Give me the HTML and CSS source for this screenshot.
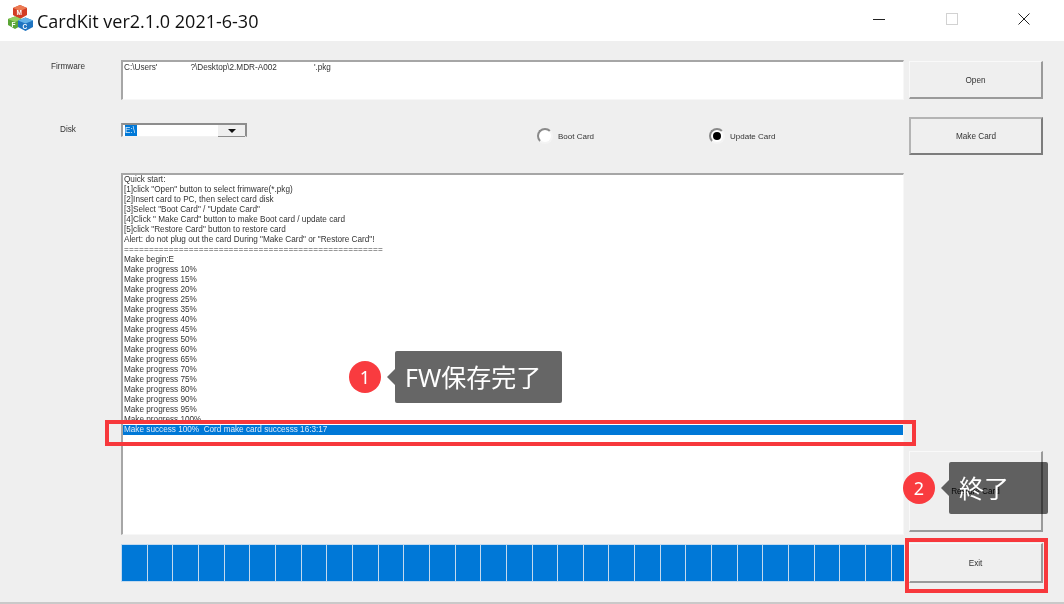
FILE: index.html
```html
<!DOCTYPE html>
<html lang="ja">
<head>
<meta charset="utf-8">
<title>CardKit</title>
<link rel="stylesheet" href="styles.css">
</head>
<body>
<div class="window">
  <header class="titlebar">
    <svg class="app-icon" width="26" height="26" viewBox="0 0 26 26">
      <path d="M5 3 L12 0 L19 3 L19 10 L12 14 L5 10 Z" fill="#d23c24"/>
      <path d="M5 3 L12 0 L19 3 L12 6 Z" fill="#ec7a52"/>
      <path d="M0 14 L7 11.500 L14 14 L14 20 L7 24 L0 20 Z" fill="#5aa536"/>
      <path d="M0 14 L7 11.500 L14 14 L7 17 Z" fill="#94cf60"/>
      <path d="M10 15.500 L17.500 12.500 L25 15.500 L25 22 L17.500 26 L10 22 Z" fill="#1f74c0"/>
      <path d="M10 15.500 L17.500 12.500 L25 15.500 L17.500 18.500 Z" fill="#63b2e8"/>
      <text x="8.500" y="10" class="cube-letter">M</text>
      <text x="3.500" y="21.500" class="cube-letter">F</text>
      <text x="14.500" y="23.500" class="cube-letter">C</text>
    </svg>
    <h1 class="app-title">CardKit ver2.1.0 2021-6-30</h1>
    <div class="win-controls">
      <svg width="12" height="12" viewBox="0 0 12 12"><path d="M0 6.500H12" stroke="#222" stroke-width="1"/></svg>
      <svg width="12" height="12" viewBox="0 0 12 12"><rect x="0.500" y="0.500" width="11" height="11" fill="none" stroke="#d2d2d2"/></svg>
      <svg width="12" height="12" viewBox="0 0 12 12"><path d="M0.500 0.500L11.500 11.500M11.500 0.500L0.500 11.500" stroke="#222" stroke-width="1"/></svg>
    </div>
  </header>

  <main class="content">
    <div class="label label-firmware">Firmware</div>
    <div class="field path-field">C:\Users'<span class="gap-a"></span>?\Desktop\2.MDR-A002<span class="gap-b"></span>'.pkg</div>
    <button class="btn btn-open">Open</button>

    <div class="label label-disk">Disk</div>
    <div class="disk-row">
      <div class="combo">
        <span class="combo-value"><span class="combo-sel">E:\</span></span>
        <span class="combo-btn"><svg width="8" height="4" viewBox="0 0 8 4"><path d="M0 0H8L4 4Z" fill="#111"/></svg></span>
      </div>
      <label class="radio radio-boot"><span class="radio-dot"></span>Boot Card</label>
      <label class="radio radio-update"><span class="radio-dot is-on"></span>Update Card</label>
    </div>
    <button class="btn btn-make">Make Card</button>

    <div class="log">
      <div>Quick start:</div>
      <div>[1]click "Open" button to select frimware(*.pkg)</div>
      <div>[2]Insert card to PC, then select card disk</div>
      <div>[3]Select "Boot Card" / "Update Card"</div>
      <div>[4]Click " Make Card" button to make Boot card / update card</div>
      <div>[5]click "Restore Card" button to restore card</div>
      <div>Alert: do not plug out the card During "Make Card" or "Restore Card"!</div>
      <div class="rule">====================================================</div>
      <div>Make begin:E</div>
      <div>Make progress 10%</div>
      <div>Make progress 15%</div>
      <div>Make progress 20%</div>
      <div>Make progress 25%</div>
      <div>Make progress 35%</div>
      <div>Make progress 40%</div>
      <div>Make progress 45%</div>
      <div>Make progress 50%</div>
      <div>Make progress 60%</div>
      <div>Make progress 65%</div>
      <div>Make progress 70%</div>
      <div>Make progress 75%</div>
      <div>Make progress 80%</div>
      <div>Make progress 90%</div>
      <div>Make progress 95%</div>
      <div>Make progress 100%</div>
      <div class="log-selected">Make success 100%&nbsp; Cord make card successs 16:3:17</div>
    </div>
    <button class="btn btn-restore">Restore Card</button>

    <div class="progress">
      <i></i><i></i><i></i><i></i><i></i><i></i><i></i><i></i><i></i><i></i><i></i><i></i><i></i><i></i><i></i><i></i>
      <i></i><i></i><i></i><i></i><i></i><i></i><i></i><i></i><i></i><i></i><i></i><i></i><i></i><i></i><i></i>
    </div>
    <button class="btn btn-exit">Exit</button>
  </main>

  <div class="red-box red-log"></div>
  <div class="red-box red-exit"></div>

  <div class="callout callout-1">
    <span class="badge">1</span>
    <span class="bubble">FW保存完了</span>
  </div>
  <div class="callout callout-2">
    <span class="badge">2</span>
    <span class="bubble">終了</span>
  </div>
</div>
</body>
</html>
```
FILE: styles.css
```css
* { box-sizing: border-box; }
html, body { margin: 0; padding: 0; }
body { width: 1064px; height: 604px; overflow: hidden; background: #fff; }

.window {
  position: relative;
  width: 1064px;
  height: 604px;
  display: flex;
  flex-direction: column;
  background: #efefef;
  border-bottom: 2px solid #c9c9c9;
  font-family: "Liberation Sans", Arial, sans-serif;
  font-size: 8.2px;
  color: #333;
  filter: blur(0.3px);
  overflow: hidden;
}

/* title bar */
.titlebar {
  flex: 0 0 41px;
  display: flex;
  align-items: center;
  background: #fff;
  padding-left: 8px;
}
.app-icon { flex: none; margin: 0 3px 5px 0; }
.cube-letter { font: bold 6.500px "Liberation Sans", sans-serif; fill: #fff; }
.app-title {
  margin: 0;
  font: 400 18px "Open Sans", sans-serif;
  color: #111;
  white-space: nowrap;
}
.win-controls {
  margin: 0 0 4px auto;
  display: flex;
  gap: 60.500px;
  padding-right: 34px;
}

/* body grid */
.content {
  display: grid;
  grid-template-columns: 116px 783px 134px;
  grid-template-rows: 57px 56px 370px 40px;
  column-gap: 5px;
  padding-top: 19px;
  align-items: start;
}
.label { grid-column: 1; padding-left: 20px; text-align: center; }
.label-firmware { margin-top: 2px; }
.label-disk { margin-top: 8px; }
.path-field, .disk-row, .log, .progress { grid-column: 2; }
.btn { grid-column: 3; }

.field, .log {
  background: #fff;
  border-style: solid;
  border-width: 2px 1px 1px 2px;
  border-color: #a6a6a6 #f7f7f7 #f7f7f7 #a6a6a6;
}
.path-field {
  height: 40px;
  padding: 0 1px;
  line-height: 12px;
  white-space: nowrap;
}
.gap-a { display: inline-block; width: 33px; }
.gap-b { display: inline-block; width: 37px; }

/* buttons */
.btn {
  display: block;
  width: 134px;
  height: 38px;
  padding: 0;
  background: #efefef;
  border-style: solid;
  border-width: 1px 2px 2px 1px;
  border-color: #f9f9f9 #9a9a9a #9a9a9a #f9f9f9;
  font: inherit;
  color: #333;
}
.btn-open { margin-top: 1px; padding-top: 2px; }
.btn-make {
  border-width: 2px;
  border-color: #b4b4b4 #7c7c7c #7c7c7c #b4b4b4;
}
.btn-restore {
  height: 81px;
  margin-top: 278px;
  color: #111;
}
.btn-exit {
  height: 40px;
  padding-top: 2px;
}

/* disk row */
.disk-row {
  display: flex;
  align-items: center;
  height: 38px;
}
.combo {
  flex: none;
  width: 126px;
  height: 14px;
  margin-bottom: 12px;
  display: flex;
  background: #fff;
  border-style: solid;
  border-width: 2px 2px 1px 2px;
  border-color: #8d8d8d #8d8d8d #f2f2f2 #9d9d9d;
}
.combo-value { flex: 1; line-height: 11px; padding-left: 2px; }
.combo-sel {
  display: inline-block;
  height: 11px;
  padding-right: 2px;
  line-height: 11px;
  background: #0078d7;
  color: #d6e9f8;
}
.combo-btn {
  flex: 0 0 27px;
  display: flex;
  align-items: center;
  justify-content: center;
  background: #efefef;
  border-bottom: 1px solid #8d8d8d;
  margin-bottom: -1px;
}
.radio {
  display: flex;
  align-items: center;
  gap: 5px;
  white-space: nowrap;
  font-size: 8px;
}
.radio-boot { margin-left: 290px; width: 172px; }
.radio-dot {
  position: relative;
  flex: none;
  width: 16px;
  height: 16px;
  border-radius: 50%;
  background: #fff;
  border: 2px solid;
  border-color: #8a8a8a #f4f4f4 #f4f4f4 #8a8a8a;
}
.radio-dot.is-on::after {
  content: "";
  position: absolute;
  left: 2px;
  top: 2px;
  width: 8px;
  height: 8px;
  border-radius: 50%;
  background: #000;
}

/* log */
.log {
  height: 362px;
  line-height: 10px;
  white-space: nowrap;
  overflow: hidden;
}
.log > div { height: 10px; padding-left: 1px; }
.rule { letter-spacing: 0.2px; }
.log-selected { background: #0078d7; color: #dcebf8; }

/* progress */
.progress {
  height: 38px;
  margin-top: 1px;
  display: flex;
  gap: 1px;
  overflow: hidden;
  padding: 1px 0 1px 1px;
  background: #c4daee;
}
.progress i {
  flex: 0 0 24.670px;
  background: #0078d7;
}

/* annotations */
.red-box {
  position: absolute;
  border: 4px solid #f7383c;
}
.red-log { left: 105px; top: 420px; width: 811px; height: 26px; }
.red-exit { left: 905px; top: 538px; width: 143px; height: 55px; }

.callout { position: absolute; display: flex; align-items: center; }
.callout-1 { left: 349px; top: 351px; }
.callout-2 { left: 903px; top: 462px; }
.badge {
  flex: none;
  width: 32px;
  height: 32px;
  border-radius: 50%;
  background: #f93b3f;
  color: #fff;
  text-align: center;
  font: 400 18px/32px "Noto Sans", sans-serif;
}
.bubble {
  position: relative;
  margin-left: 14px;
  width: 167px;
  height: 52px;
  padding: 0 10px;
  border-radius: 2px;
  background: #666;
  color: #fff;
  font: 400 25px/52px "Noto Sans", "Noto Sans CJK JP", sans-serif;
  white-space: nowrap;
}
.callout-2 .bubble { background: rgba(0, 0, 0, 0.6); width: 99px; }
.bubble::before {
  content: "";
  position: absolute;
  left: -8px;
  top: 18px;
  border-style: solid;
  border-width: 8px 8px 8px 0;
  border-color: transparent #666 transparent transparent;
}
.callout-2 .bubble::before { border-right-color: #5e5e5e; }
```
